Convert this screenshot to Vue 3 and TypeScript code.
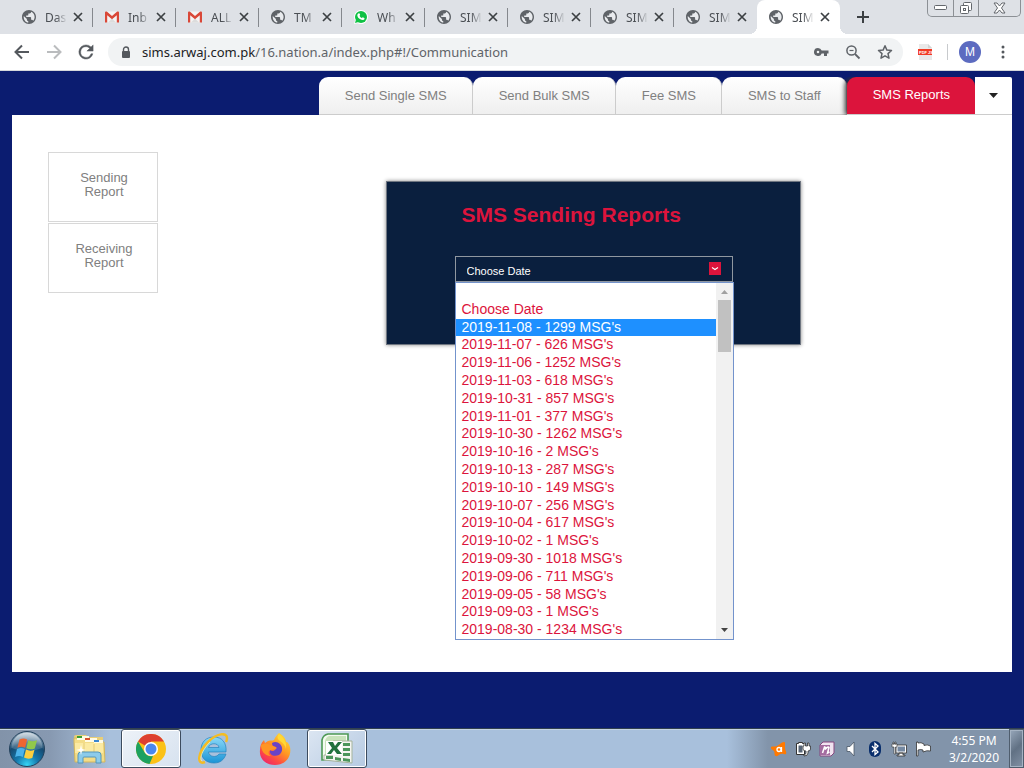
<script setup lang="ts">
import { ref } from 'vue'

type Site = 'globe' | 'mail' | 'chat'
interface BrowserTab { id: number; title: string; site: Site }

const browserTabs: BrowserTab[] = [
  { id: 1, title: 'Das', site: 'globe' },
  { id: 2, title: 'Inb', site: 'mail' },
  { id: 3, title: 'ALL', site: 'mail' },
  { id: 4, title: 'TM', site: 'globe' },
  { id: 5, title: 'Wh', site: 'chat' },
  { id: 6, title: 'SIM', site: 'globe' },
  { id: 7, title: 'SIM', site: 'globe' },
  { id: 8, title: 'SIM', site: 'globe' },
  { id: 9, title: 'SIM', site: 'globe' },
  { id: 10, title: 'SIM', site: 'globe' },
]
const activeBrowserTab = ref(10)

const sections = ['Send Single SMS', 'Send Bulk SMS', 'Fee SMS', 'SMS to Staff', 'SMS Reports']
const activeSection = ref('SMS Reports')

const dates = [
  "2019-11-08 - 1299 MSG's",
  "2019-11-07 - 626 MSG's",
  "2019-11-06 - 1252 MSG's",
  "2019-11-03 - 618 MSG's",
  "2019-10-31 - 857 MSG's",
  "2019-11-01 - 377 MSG's",
  "2019-10-30 - 1262 MSG's",
  "2019-10-16 - 2 MSG's",
  "2019-10-13 - 287 MSG's",
  "2019-10-10 - 149 MSG's",
  "2019-10-07 - 256 MSG's",
  "2019-10-04 - 617 MSG's",
  "2019-10-02 - 1 MSG's",
  "2019-09-30 - 1018 MSG's",
  "2019-09-06 - 711 MSG's",
  "2019-09-05 - 58 MSG's",
  "2019-09-03 - 1 MSG's",
  "2019-08-30 - 1234 MSG's",
]
const choices = ['', 'Choose Date', ...dates]
const selected = ref('Choose Date')
const highlighted = ref(dates[0])
const open = ref(true)

function choose(value: string) {
  selected.value = value || 'Choose Date'
  open.value = false
}
</script>

<template>
  <div class="desktop">
    <header class="tabstrip">
      <div v-for="t in browserTabs" :key="t.id" class="btab" :class="{ active: t.id === activeBrowserTab }">
        <button class="btab-main" type="button" @click="activeBrowserTab = t.id">
          <svg v-if="t.site === 'globe'" class="fav" viewBox="2 2 20 20" aria-hidden="true">
            <circle cx="12" cy="12" r="9" fill="#e9ebee" />
            <path fill="#5f6368" d="M12 2C6.480 2 2 6.480 2 12s4.480 10 10 10 10-4.480 10-10S17.520 2 12 2zM4.500 10.500L9 15v1c0 1.100.9 2 2 2v1.930c-4-.5-7-3.900-6.500-9.430zM17.900 17.390c-.26-.81-1-1.390-1.900-1.390h-1v-3c0-.55-.45-1-1-1H8v-2h2c.55 0 1-.45 1-1V7h2c1.100 0 2-.9 2-2v-.41c2.930 1.190 5 4.060 5 7.410 0 2.080-.8 3.970-2.100 5.390z" />
          </svg>
          <svg v-else-if="t.site === 'mail'" class="fav" viewBox="0 0 14 14" aria-hidden="true">
            <path fill="#f4f4f4" d="M1 1.500h12v11H1z" />
            <path fill="#dcdcdc" d="M3 12.500l4-4 4 4z" />
            <path fill="#d94838" d="M0 12.500v-10q0-1 1-1h.8L7 6l5.200-4.500h.8q1 0 1 1v10h-2.200V5.200L7 9.200 2.200 5.200v7.300z" />
          </svg>
          <svg v-else class="fav" viewBox="0 0 14 14" aria-hidden="true">
            <path fill="#fff" d="M7 0a7 7 0 1 1-3.300 13.200L0 14l1-3.600A7 7 0 0 1 7 0z" />
            <circle cx="7" cy="7" r="6" fill="#0fc144" />
            <path fill="#0fc144" d="M1 13l1-3.500L4.500 12z" />
            <path fill="#fff" d="M4.400 3.500c.8-.6 1.300 0 1.700 1.200.1.500-.4.700-.5 1 .4 1.200 1.300 2 2.400 2.400.4-.1.600-.9 1.100-.7 1.300.5 1.700.8 1.400 1.500-.7 1.500-2.400 1.400-4.200.4-1.700-1-2.800-2.400-3-3.900 0-.8.600-1.500 1.100-1.900z" />
          </svg>
          <span class="btab-title">{{ t.title }}</span>
        </button>
        <button class="btab-close" type="button" aria-label="Close tab">
          <svg viewBox="0 0 10 10" aria-hidden="true"><path d="M1 1l8 8m0-8l-8 8" stroke="#3c4043" stroke-width="1.700" /></svg>
        </button>
      </div>
      <button class="newtab" type="button" aria-label="New tab">
        <svg viewBox="0 0 12 12" aria-hidden="true"><path d="M6 0v12M0 6h12" stroke="#3c4043" stroke-width="2" /></svg>
      </button>
      <div class="winctl">
        <button type="button" aria-label="Minimize">
          <svg width="13" height="6" viewBox="0 0 13 6" aria-hidden="true"><rect x=".5" y=".5" width="12" height="4" rx="1" fill="#fff" stroke="#63676c" /></svg>
        </button>
        <button type="button" aria-label="Restore">
          <svg width="14" height="14" viewBox="0 0 14 14" fill="#fff" stroke="#63676c" aria-hidden="true">
            <rect x="4.500" y="1.500" width="8" height="8" rx="1" /><rect x="1.500" y="4.500" width="8" height="8" rx="1" /><rect x="4.500" y="7.500" width="2" height="2" />
          </svg>
        </button>
        <button class="wide" type="button" aria-label="Close">
          <svg width="13" height="12" viewBox="0 0 13 12" aria-hidden="true"><path d="M1 1h3l2.500 3L9 1h3L8.500 6l3.500 5H9L6.500 8 4 11H1l3.500-5z" fill="#fff" stroke="#63676c" /></svg>
        </button>
      </div>
    </header>

    <nav class="toolbar" aria-label="Browser">
      <button class="nav" type="button" aria-label="Back">
        <svg viewBox="0 0 16 16" fill="none" stroke="#54585d" stroke-width="2" aria-hidden="true"><path d="M15 8H2M8 1.500L1.500 8 8 14.500" /></svg>
      </button>
      <button class="nav" type="button" aria-label="Forward">
        <svg viewBox="0 0 16 16" fill="none" stroke="#babcbe" stroke-width="2" aria-hidden="true"><path d="M1 8h13M8 1.500L14.500 8 8 14.500" /></svg>
      </button>
      <button class="nav" type="button" aria-label="Reload">
        <svg viewBox="3 3 18 18" aria-hidden="true"><path fill="#54585d" stroke="#54585d" stroke-width=".5" d="M17.650 6.350A7.958 7.958 0 0 0 12 4a8 8 0 1 0 7.730 10h-2.080A6 6 0 1 1 12 6c1.660 0 3.140.69 4.220 1.780L13 11h7V4z" /></svg>
      </button>
      <div class="omnibox">
        <svg class="lock" viewBox="0 0 10 13" aria-hidden="true"><path d="M2.500 6V3.500a2.500 2.500 0 0 1 5 0V6" fill="none" stroke="#54585d" stroke-width="1.400" /><rect x="1" y="5" width="8" height="7" rx="1" fill="#54585d" /></svg>
        <span class="url"><b>sims.arwaj.com.pk</b>/16.nation.a/index.php#!/Communication</span>
        <button type="button" aria-label="Saved passwords">
          <svg viewBox="0 0 16 16" aria-hidden="true"><path fill="#5f6368" fill-rule="evenodd" d="M5 4a4 4 0 0 1 3.700 2.500H15.500v3H14V12h-3V9.500H8.700A4 4 0 1 1 5 4zm0 2.700a1.300 1.300 0 1 0 0 2.600 1.300 1.300 0 0 0 0-2.600z" /></svg>
        </button>
        <button type="button" aria-label="Zoom">
          <svg viewBox="0 0 16 16" fill="none" stroke="#5f6368" aria-hidden="true"><circle cx="6.500" cy="6.500" r="4.600" stroke-width="1.500" /><path d="M10 10l4.500 4.500" stroke-width="1.800" /><path d="M4.500 6.500h4" stroke-width="1.200" /></svg>
        </button>
        <button type="button" aria-label="Bookmark">
          <svg viewBox="0 0 16 16" aria-hidden="true"><path fill="none" stroke="#5f6368" stroke-width="1.500" stroke-linejoin="round" d="M8 1.800l1.900 4.300 4.600.4-3.500 3.100 1 4.600L8 11.800l-4 2.400 1-4.600-3.500-3.100 4.600-.4z" /></svg>
        </button>
      </div>
      <button class="ext" type="button" aria-label="PDF extension">
        <svg viewBox="0 0 16 16" aria-hidden="true">
          <path fill="#e9e9e9" d="M2 0h9l4 4v12H2z" /><path fill="#d4d4d4" d="M11 0v4h4z" /><rect x="1" y="5" width="14" height="6" fill="#f13b24" />
          <text x="2" y="10" font-size="4" font-weight="700" font-family="Liberation Sans, sans-serif" fill="#fff">PDF JS</text>
        </svg>
      </button>
      <i class="divider"></i>
      <button class="avatar" type="button" aria-label="Profile">M</button>
      <button class="more" type="button" aria-label="Menu">
        <svg viewBox="0 0 4 14" fill="#54585d" aria-hidden="true"><circle cx="2" cy="2" r="1.500" /><circle cx="2" cy="7" r="1.500" /><circle cx="2" cy="12" r="1.500" /></svg>
      </button>
    </nav>

    <main class="page">
      <nav class="sections" aria-label="Communication">
        <button v-for="s in sections" :key="s" type="button" class="section" :class="{ active: s === activeSection }" @click="activeSection = s">{{ s }}</button>
        <button type="button" class="caret" aria-label="More sections">
          <svg width="9" height="5" viewBox="0 0 9 5" aria-hidden="true"><path d="M0 0h9L4.500 5z" fill="#222" /></svg>
        </button>
      </nav>
      <div class="card">
        <aside class="side">
          <a href="#!/Sending">Sending<br>Report</a>
          <a href="#!/Receiving">Receiving<br>Report</a>
        </aside>
        <div class="content">
          <section class="panel">
            <div class="form">
              <h1>SMS Sending Reports</h1>
              <div class="picker">
                <select v-model="selected" aria-label="Choose Date" @mousedown.prevent="open = !open">
                  <option v-for="c in choices" :key="c" :value="c">{{ c }}</option>
                </select>
                <svg class="chev" viewBox="0 0 12 13" aria-hidden="true"><path fill="#dc143c" d="M0 0h12v13H0z" /><path d="M3 5.500l3 2 3-2" fill="none" stroke="#fff" stroke-width="1.100" /></svg>
                <div v-if="open" class="popup">
                  <ul role="listbox" aria-label="Dates">
                    <li v-for="c in choices" :key="c" role="option" :aria-selected="c === highlighted" :class="{ hot: c === highlighted }" @mouseenter="highlighted = c" @click="choose(c)">{{ c }}</li>
                  </ul>
                  <div class="scroll" aria-hidden="true">
                    <svg width="7" height="4" viewBox="0 0 7 4"><path d="M0 4h7L3.500 0z" fill="#a0a0a0" /></svg>
                    <i class="thumb"></i>
                    <svg class="down" width="7" height="4" viewBox="0 0 7 4"><path d="M0 0h7L3.500 4z" fill="#444" /></svg>
                  </div>
                </div>
              </div>
            </div>
          </section>
        </div>
      </div>
    </main>

    <footer class="taskbar">
      <button class="start" type="button" aria-label="Start">
        <svg viewBox="0 0 36 36" aria-hidden="true">
          <defs>
            <radialGradient id="orb" cx=".5" cy=".95" r=".9"><stop offset="0" stop-color="#35d5f5" /><stop offset=".35" stop-color="#1579ad" /><stop offset=".7" stop-color="#174a70" /><stop offset="1" stop-color="#8ba4b8" /></radialGradient>
            <linearGradient id="gloss" x2="0" y2="1"><stop stop-color="#fff" stop-opacity=".6" /><stop offset="1" stop-color="#fff" stop-opacity=".1" /></linearGradient>
          </defs>
          <circle cx="18" cy="18" r="17.500" fill="url(#orb)" stroke="#24425c" />
          <path d="M2.500 17a15.500 15.500 0 0 1 31 0c-8 3-20 4-31 0z" fill="url(#gloss)" />
          <path d="M10.500 8.500c3-1.600 5.300-1.300 7.600.1l-2 8.200c-2.500-1.400-4.900-1.400-7.700-.1z" fill="#ee6631" />
          <path d="M19.300 9.200c2.800 1.300 5.300 1.300 8.700 0l-2.200 8.200c-3 1.300-5.600 1.200-8.500-.1z" fill="#91c84b" />
          <path d="M8 18c2.900-1.400 5.200-1.300 7.800.1l-2 8c-2.500-1.400-4.900-1.300-7.700 0z" fill="#4bb3ea" />
          <path d="M17 18.600c2.900 1.400 5.500 1.300 8.500.1l-2.200 8.200c-3 1.200-5.600 1-8.300-.3z" fill="#fdcf3e" />
        </svg>
      </button>
      <button class="app" type="button" aria-label="File Explorer">
        <svg width="34" height="30" viewBox="0 0 34 30" aria-hidden="true">
          <path d="M2 3q0-2 2-2h10l2 2h15v5H2z" fill="#e9cf77" />
          <path d="M2 8V4h10l2 2h8l1 2h9l1 20H3z" fill="#f3dc87" stroke="#d2b65e" />
          <path d="M5 2h12v4H5zM13 4h12v4H13zM22 6h9v4h-9z" fill="#fffbe4" />
          <path d="M5 2h5v2H5z" fill="#3b9d32" /><path d="M13 4h5v2h-5z" fill="#d8512e" /><path d="M22 6h5v2h-5z" fill="#3a86d0" />
          <path d="M3 9h28v10H3z" fill="#fbeaa2" /><path d="M12 9v10M22 10v9" stroke="#e5ca74" />
          <path d="M6 29V21q0-3 3-3h17q3 0 3 3v8h-5v-5q0-1-1-1H12q-1 0-1 1v5z" fill="#8ccbea" stroke="#5496ba" />
          <path d="M9 11l1 4 4 1-4 1-1 4-1-4-4-1 4-1z" fill="#fff" />
        </svg>
      </button>
      <button class="app framed" type="button" aria-label="Chrome">
        <svg width="30" height="30" viewBox="0 0 30 30" aria-hidden="true">
          <circle cx="15" cy="15" r="15" fill="#fbc116" />
          <path d="M15 15L2 7.500A15 15 0 0 1 28 7.500H15z" fill="#dd4031" />
          <path d="M2 7.500L9 19q3 4 8 3l-3.500 8A15 15 0 0 1 2 7.500z" fill="#1da160" />
          <circle cx="15" cy="15" r="7" fill="#fff" /><circle cx="15" cy="15" r="5.500" fill="#4a87ee" />
        </svg>
      </button>
      <button class="app" type="button" aria-label="Internet Explorer">
        <svg width="32" height="32" viewBox="0 0 32 32" aria-hidden="true">
          <defs><linearGradient id="ie" x2="0" y2="1"><stop stop-color="#8bd9f8" /><stop offset="1" stop-color="#1a94d6" /></linearGradient></defs>
          <path fill="url(#ie)" stroke="#2784bd" stroke-width=".7" fill-rule="evenodd" d="M17 4c8 0 13 6 12 15H11.500c.5 5 8 6 10.500 2h7c-2 6-6 9-12 9C9 30 4 25 4 17S9 4 17 4zm-5.500 10.500H22c-.5-5-9.500-5-10.500 0z" />
          <path d="M8 29C-1 33 1 19 11 9 20 0 30-1 30 5c0 2-.5 3-1 4" fill="none" stroke="#f4bc24" stroke-width="2.500" />
          <path d="M5 28C2 26 5 17 13 9" fill="none" stroke="#fff0a0" stroke-width=".8" />
        </svg>
      </button>
      <button class="app" type="button" aria-label="Firefox">
        <svg width="32" height="32" viewBox="0 0 32 32" aria-hidden="true">
          <defs><linearGradient id="fox" x1=".9" y1="0" x2=".2" y2="1"><stop stop-color="#ffe53a" /><stop offset=".45" stop-color="#ff9822" /><stop offset=".75" stop-color="#ff4b43" /><stop offset="1" stop-color="#ed236d" /></linearGradient></defs>
          <path fill="url(#fox)" d="M20 0c5 3 7 6 7 9 2 0 3 2 4 5 2 10-5 18-15 18S0 25 1 17c0-4 1-7 4-10l1 3 3-2c3-1 4 0 6-1 1-3 3-5 5-7z" />
          <path fill="#6a43c6" d="M13 10c3-2 6-1 8 1 3 3 3 8-1 11-5 2-10 0-9-5 2 2 4 1 6-1 1-1 1-2-1-2-2 0-3-2-3-4z" />
          <path fill="#ff9524" d="M2 12c3-2 7-2 9 0 2 1 4 1 6 2-1 3-5 2-7 4-1 2 0 4 2 5-7 0-10-6-10-11z" />
          <path fill="#ffd935" d="M20 1c5 4 8 8 7 15-1-4-3-6-6-8-3-2-3-5-1-7z" />
        </svg>
      </button>
      <button class="app framed pale" type="button" aria-label="Excel">
        <svg width="32" height="32" viewBox="0 0 32 32" aria-hidden="true">
          <path d="M7 1h20v25L1 27V7q1-5 6-6z" fill="#f4faf1" stroke="#4e9955" stroke-width="1.600" /><path d="M8 3h17v21L4 25V8q1-4 4-5z" fill="#c9e3bb" />
          <path d="M12 8h19v22l-28-3V22h9z" fill="#f4f5f1" stroke="#a5b39c" />
          <path fill="#4b955a" d="M22 10h7v3h-7zm0 5h7v3h-7zm0 5h7v3h-7zm0 5l7 1v3l-7-1zM5 23h7v3H5zm9 1l6 1v3l-6-1z" />
          <path fill="#fff" d="M5 8h16v14H5z" /><path fill="#20713d" d="M7 9h5l2 4 3-4h4l-5 6 5 6h-5l-3-4-3 4H6l5-6z" />
        </svg>
      </button>
      <div class="tray">
        <svg viewBox="0 0 16 16" aria-hidden="true"><path fill="#ff7900" d="M9 3c2-2 5-3 5-1v5c0 2 2 4 1 6-1 1-3-1-5 0-2 0-3 3-5 2-2 0-1-3-2-5-1-1-4-2-3-4 1-1 4 0 6-1z" /><circle cx="8" cy="8.500" r="2" fill="none" stroke="#fff" stroke-width="1.300" /><path d="M10.500 6v5" stroke="#fff" stroke-width="1.300" /></svg>
        <svg viewBox="0 0 16 16" aria-hidden="true"><path d="M1.500 2.500h2v-1h4v1h2v11h-8z" fill="#fff" stroke="#333" /><path d="M3.500 4.500h4v7h-4z" fill="#566475" /><path d="M8 5h1V2h1.500v3h2V2H14v3h1.500v3q0 2-2.500 2v2q0 3-4 3v-1.500q2 0 2-1.500v-2Q8 10 8 8z" fill="#fff" stroke="#333" stroke-width=".8" /></svg>
        <svg viewBox="0 0 16 16" aria-hidden="true"><path d="M4 1h11v11l-3 3H1V4z" fill="#f1e3f0" stroke="#85467f" /><path d="M1 4h10v10H1z" fill="#a46ca0" /><path d="M3.500 12L5.500 6l1 .5-.5 2Q9 5 10 6.500L8.500 12l2-1" fill="none" stroke="#fff" stroke-width="1.500" /></svg>
        <svg viewBox="0 0 16 16" aria-hidden="true"><path d="M4 5.500h3L11 1v14l-4-4.500H4z" fill="#fff" stroke="#495565" stroke-width=".8" /></svg>
        <svg viewBox="0 0 16 16" aria-hidden="true"><rect x="2" width="12" height="16" rx="6" fill="#082e6c" /><path d="M5 5l6 6-3 2.500v-11L11 5l-6 6" fill="none" stroke="#fff" stroke-width="1.300" /></svg>
        <svg viewBox="0 0 16 16" aria-hidden="true"><path d="M5 4h10.500v8H5zM8 12h4v2h2v1H6v-1h2z" fill="#fff" stroke="#333" stroke-width=".8" /><path d="M6.500 5.500H14v5H6.500z" fill="#7589a2" /><path d="M1 3h5v3H4.500v7H3V6H1zM2 1h1v2H2zM4 1h1v2H4z" fill="#fff" stroke="#333" stroke-width=".6" /></svg>
        <svg viewBox="0 0 16 16" aria-hidden="true"><path d="M1.500 1v14H3V9q3-1 5 0v2q4-2 7.500-1V5Q12 3 9 4.500V3Q6 1 3 2V1z" fill="#fff" stroke="#333" stroke-width=".8" /></svg>
      </div>
      <div class="clock"><span>4:55 PM</span><span>3/2/2020</span></div>
      <button class="peek" type="button" aria-label="Show desktop"></button>
    </footer>
  </div>
</template>

<style>
body { margin: 0; }
</style>

<style scoped>
* { box-sizing: border-box; }
button { border: 0; margin: 0; padding: 0; background: none; font: inherit; color: inherit; }
svg { display: block; flex: none; }
.desktop { display: flex; flex-direction: column; height: 100vh; overflow: hidden; font-family: "Liberation Sans", Arial, sans-serif; }

.tabstrip { display: flex; height: 34px; flex: none; background: #dee1e6; padding-left: 10px; font: 12px "Noto Sans", sans-serif; color: #4b4f54; }
.btab { position: relative; display: flex; align-items: center; flex: 0 1 83px; min-width: 0; padding: 0 10px 0 12px; }
.btab:not(.active)::after { content: ""; position: absolute; right: 0; top: 8px; width: 1px; height: 19px; background: #85888d; }
.btab:nth-last-child(4)::after { display: none; }
.btab.active { background: #fff; border-radius: 8px 8px 0 0; }
.btab.active::before, .btab.active::after { content: ""; position: absolute; bottom: 0; width: 8px; height: 8px; }
.btab.active::before { left: -8px; background: radial-gradient(circle at 0 0, transparent 8px, #fff 8px); }
.btab.active::after { right: -8px; background: radial-gradient(circle at 100% 0, transparent 8px, #fff 8px); }
.btab-main { display: flex; align-items: center; gap: 9px; flex: 1; min-width: 0; }
.fav { width: 14px; height: 14px; }
.btab-title { width: 22px; white-space: nowrap; text-align: left; mask-image: linear-gradient(90deg, #000 50%, transparent); }
.btab-close svg { width: 10px; height: 10px; }
.newtab { width: 46px; display: grid; place-items: center; }
.newtab svg { width: 12px; height: 12px; }
.winctl { display: flex; height: 17px; margin: 0 3px 0 auto; border: 1px solid #8c9095; border-top: 0; border-radius: 0 0 5px 5px; }
.winctl button { width: 25px; display: grid; place-items: center; }
.winctl button + button { border-left: 1px solid #8c9095; }
.winctl .wide { width: 42px; }

.toolbar { display: flex; align-items: center; height: 37px; flex: none; padding-left: 14px; background: #fff; border-bottom: 1px solid #d5d8dc; }
.nav { margin-right: 16px; }
.nav svg { width: 16px; height: 16px; }
.omnibox { display: flex; align-items: center; flex: 1; min-width: 0; height: 28px; margin-left: -2px; padding: 0 10px 0 13px; border-radius: 14px; background: #f1f3f4; }
.lock { width: 10px; height: 13px; }
.url { flex: 1; min-width: 0; overflow: hidden; margin-left: 11px; font: 13px/20px "Noto Sans", sans-serif; color: #5f6368; white-space: nowrap; }
.url b { font-weight: 400; color: #202124; }
.omnibox button { margin-left: 16px; }
.omnibox button svg, .ext svg { width: 16px; height: 16px; }
.ext { margin-left: 14px; }
.divider { width: 1px; height: 16px; margin: 0 11px 0 14px; background: #c8cacd; }
.avatar { width: 22px; height: 22px; border-radius: 50%; background: #5c6bc0; color: #fff; font-size: 12px; line-height: 22px; }
.more { margin: 0 19px 0 20px; }
.more svg { width: 4px; height: 14px; }

.page { display: flex; flex-direction: column; flex: 1; min-height: 0; padding: 6px 12px 56px; background: #0b1c70; }
.sections { display: flex; justify-content: flex-end; height: 38px; flex: none; font-size: 13px; color: #808080; }
.section { padding: 0 25px 0 26px; border-right: 1px solid #ccc; border-bottom: 1px solid #ccc; border-radius: 9px 9px 0 0; background: linear-gradient(#fff, #efefef); }
.section.active { position: relative; padding-bottom: 2px; border-right: 0; background: #dc143c; color: #fff; box-shadow: -2px 0 5px #333; clip-path: inset(0 0 0 -8px); }
.caret { width: 37px; display: grid; place-items: center; border-bottom: 1px solid #ccc; border-radius: 0 2px 0 0; background: #fff; }
.card { display: flex; flex: 1; min-height: 0; background: #fff; }
.side { display: flex; flex-direction: column; gap: 1px; width: 162px; flex: none; padding: 37px 16px 0 36px; }
.side a { display: grid; place-content: center; height: 70px; padding: 0 0 4px 2px; border: 1px solid #d8d8d8; color: #808080; font-size: 13px; line-height: 14px; text-align: center; text-decoration: none; }
.content { display: flex; flex: 1; min-width: 0; justify-content: center; align-items: flex-start; padding-top: 66px; }
.panel { width: 415px; height: 164px; border: 1px solid #6f7681; background: #0a1f3e; box-shadow: 0 0 4px #888; }
.form { width: 278px; margin-left: 68px; padding-top: 20px; }
h1 { margin: 0 0 29px; padding-left: 7px; color: #dc143c; font-size: 21px; line-height: 25px; white-space: nowrap; }
.picker { position: relative; }
select { display: block; width: 100%; height: 26px; padding: 3px 30px 0 11px; appearance: none; border: 1px solid #9097a0; border-radius: 0; background: #0a1f3e; color: #fff; font: 11px "Liberation Sans", Arial, sans-serif; }
.chev { position: absolute; right: 12px; top: 6px; width: 12px; height: 13px; pointer-events: none; }
.popup { position: absolute; top: 100%; left: 0; display: flex; width: 279px; height: 358px; border: 1px solid #7393cc; background: #fff; }
.popup ul { display: grid; grid-auto-rows: 1fr; flex: 1; margin: 0; padding: 0; list-style: none; color: #dc143c; font-size: 14px; line-height: 17px; }
.popup li { padding-left: 6px; min-height: 0; white-space: nowrap; }
.popup .hot { background: #1e90ff; color: #fff; }
.scroll { display: flex; flex-direction: column; align-items: center; width: 17px; padding: 7px 0; background: #f1f1f1; }
.thumb { width: 13px; height: 52px; margin-top: 6px; background: #c1c1c1; }
.down { margin-top: auto; }

.taskbar { display: flex; align-items: center; height: 40px; flex: none; padding-left: 9px; border-top: 1px solid #31404f; box-shadow: inset 0 1px #c5d4e4; background: linear-gradient(90deg, #8293a9 0, #8799b1 50px, #a8c0dc 110px, #a8c0dc 71%, #8294aa 75%); }
.start svg { width: 36px; height: 36px; }
.start { margin-right: 14px; }
.app { display: grid; place-items: center; width: 60px; height: 39px; margin-right: 2px; }
.framed { border: 1px solid #3c4b5e; border-radius: 3px; background: linear-gradient(135deg, #edf2f8, #d7e2ef); box-shadow: inset 0 0 0 1px #fff; }
.pale { background: linear-gradient(135deg, #dce6f2, #b6cae2); }
.tray { display: flex; gap: 8px; margin: 0 8px 0 auto; }
.tray svg { width: 16px; height: 16px; }
.clock { display: flex; flex-direction: column; width: 70px; color: #fff; font: 12px/17px "Noto Sans", sans-serif; text-align: center; }
.peek { align-self: stretch; width: 15px; border: 1px solid #4f5d6d; box-shadow: inset 0 0 0 1px #a5b3c3; background: linear-gradient(135deg, #98a8bb, #617184 50%, #8291a5); }
</style>
